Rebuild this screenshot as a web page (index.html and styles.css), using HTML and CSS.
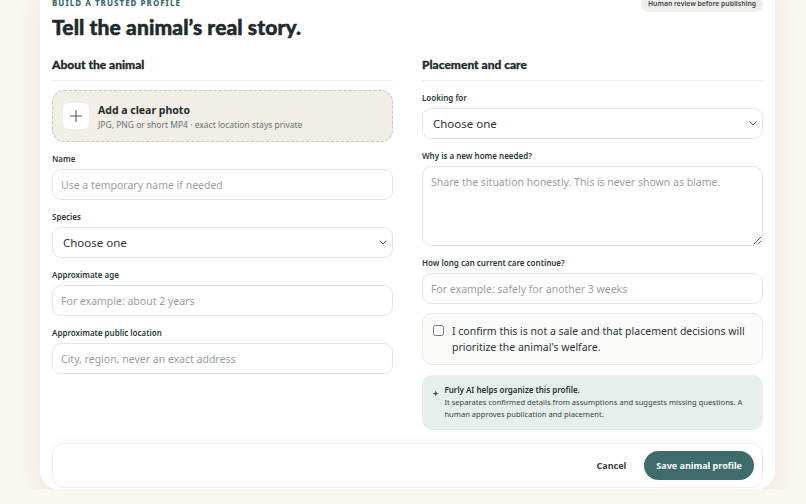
FILE: index.html
```html
<!DOCTYPE html>
<html lang="en">
<head>
  <meta charset="UTF-8">
  <meta name="viewport" content="width=device-width, initial-scale=1.0">
  <title>Furly - New animal profile</title>
  <link rel="stylesheet" href="styles.css">
</head>
<body>
  <main class="profile-card">
    <!-- Header -->
    <header class="profile-header">
      <div>
        <p class="eyebrow">Build a trusted profile</p>
        <h1>Tell the animal’s real story.</h1>
      </div>
      <span class="review-badge">Human review before publishing</span>
    </header>

    <form class="profile-form" onsubmit="return false;">
      <div class="form-columns">
        <!-- Left column -->
        <section class="form-section">
          <h2>About the animal</h2>

          <label class="dropzone">
            <span class="dropzone-icon">
              <svg width="14" height="14" viewBox="0 0 14 14" fill="none" stroke="currentColor" stroke-width="1.1" stroke-linecap="round">
                <path d="M7 1.5v11M1.5 7h11"/>
              </svg>
            </span>
            <span class="dropzone-text">
              <strong>Add a clear photo</strong>
              <small>JPG, PNG or short MP4 · exact location stays private</small>
            </span>
            <input type="file" accept="image/png,image/jpeg,video/mp4" hidden>
          </label>

          <div class="field">
            <label for="name">Name</label>
            <input id="name" type="text" placeholder="Use a temporary name if needed">
          </div>

          <div class="field">
            <label for="species">Species</label>
            <div class="select-wrap">
              <select id="species">
                <option>Choose one</option>
                <option>Dog</option>
                <option>Cat</option>
                <option>Rabbit</option>
                <option>Other</option>
              </select>
              <svg class="chevron" width="8" height="5" viewBox="0 0 8 5" fill="none" stroke="currentColor" stroke-width="1" stroke-linecap="round" stroke-linejoin="round">
                <path d="M1 1l3 3 3-3"/>
              </svg>
            </div>
          </div>

          <div class="field">
            <label for="age">Approximate age</label>
            <input id="age" type="text" placeholder="For example: about 2 years">
          </div>

          <div class="field">
            <label for="location">Approximate public location</label>
            <input id="location" type="text" placeholder="City, region, never an exact address">
          </div>
        </section>

        <!-- Right column -->
        <section class="form-section">
          <h2>Placement and care</h2>

          <div class="field">
            <label for="looking">Looking for</label>
            <div class="select-wrap">
              <select id="looking">
                <option>Choose one</option>
                <option>Adoption</option>
                <option>Foster home</option>
              </select>
              <svg class="chevron" width="8" height="5" viewBox="0 0 8 5" fill="none" stroke="currentColor" stroke-width="1" stroke-linecap="round" stroke-linejoin="round">
                <path d="M1 1l3 3 3-3"/>
              </svg>
            </div>
          </div>

          <div class="field">
            <label for="reason">Why is a new home needed?</label>
            <textarea id="reason" placeholder="Share the situation honestly. This is never shown as blame."></textarea>
          </div>

          <div class="field">
            <label for="duration">How long can current care continue?</label>
            <input id="duration" type="text" placeholder="For example: safely for another 3 weeks">
          </div>

          <label class="confirm">
            <input type="checkbox">
            <span>I confirm this is not a sale and that placement decisions will prioritize the animal's welfare.</span>
          </label>

          <div class="ai-note">
            <svg class="ai-spark" width="11" height="11" viewBox="0 0 10 10">
              <path d="M5 0.5C5.4 3.3 6.2 4.4 9.5 5 6.2 5.6 5.4 6.7 5 9.5 4.6 6.7 3.8 5.6 0.5 5 3.8 4.4 4.6 3.3 5 0.5Z" fill="currentColor"/>
            </svg>
            <div>
              <strong>Furly AI helps organize this profile.</strong>
              <p>It separates confirmed details from assumptions and suggests missing questions. A human approves publication and placement.</p>
            </div>
          </div>
        </section>
      </div>

      <!-- Actions -->
      <div class="form-actions">
        <button type="button" class="btn-cancel">Cancel</button>
        <button type="submit" class="btn-save">Save animal profile</button>
      </div>
    </form>
  </main>
</body>
</html>
```

FILE: styles.css
```css
/* Global Styles */
body {
  margin: 0;
  font-family: 'Noto Sans', 'DejaVu Sans', sans-serif;
  background-color: #faf7f0;
  color: #1f2b2d;
}

/* Card */
.profile-card {
  width: 711px;
  margin: -16px 0 0 40px;
  padding: 0 12px 1px;
  background: #fff;
  border-radius: 0 0 18px 18px;
  box-shadow: 0 10px 24px rgba(60, 50, 30, 0.08);
}

/* Header */
.profile-header {
  display: flex;
  justify-content: space-between;
  align-items: flex-start;
}

.eyebrow {
  margin: 0;
  padding-top: 14px;
  font-size: 8px;
  line-height: 10px;
  font-weight: 800;
  letter-spacing: 1px;
  text-transform: uppercase;
  color: #3e6b6c;
}

.profile-header h1 {
  margin: 6px 0 0;
  font-family: 'Lato Black', 'Lato', 'Noto Sans', sans-serif;
  font-size: 21px;
  line-height: 26px;
  font-weight: 900;
  letter-spacing: 0.1px;
  -webkit-text-stroke: 0.5px #1f2a2c;
  color: #1f2a2c;
}

.review-badge {
  margin-top: 13px;
  padding: 2px 7px 3px;
  font-size: 6.8px;
  line-height: 10px;
  font-weight: 600;
  color: #3c4648;
  background: #efeeea;
  border-radius: 10px;
}

/* Columns */
.form-columns {
  display: grid;
  grid-template-columns: 1fr 1fr;
  gap: 29px;
  margin-top: 17px;
}

.form-section h2 {
  margin: 0 0 9px;
  padding-bottom: 7px;
  font-family: 'Lato Black', 'Lato', 'Noto Sans', sans-serif;
  font-size: 12px;
  line-height: 16px;
  font-weight: 900;
  -webkit-text-stroke: 0.3px #1f2b2d;
  border-bottom: 1px solid #eeeeea;
}

/* Photo drop zone */
.dropzone {
  display: flex;
  align-items: center;
  gap: 9px;
  height: 50px;
  padding: 0 10px;
  background: #f1eee7;
  border: 1px dashed #c8c5bc;
  border-radius: 12px;
  cursor: pointer;
}

.dropzone-icon {
  display: flex;
  align-items: center;
  justify-content: center;
  width: 26px;
  height: 26px;
  background: #fff;
  border-radius: 6px;
  color: #4c5a5c;
}

.dropzone-text strong {
  display: block;
  font-size: 10.5px;
  line-height: 14px;
  font-weight: 700;
}

.dropzone-text small {
  display: block;
  margin-top: 2px;
  font-size: 8.5px;
  color: #6b7374;
}

/* Fields */
.field {
  margin-top: 11px;
}

.field label {
  display: block;
  margin-bottom: 5px;
  font-size: 8px;
  line-height: 11px;
  font-weight: 600;
  color: #2d3739;
}

.field input,
.field select,
.field textarea {
  display: block;
  box-sizing: border-box;
  width: 100%;
  height: 31px;
  padding: 0 8px;
  font-family: inherit;
  font-size: 10.5px;
  color: #2b3537;
  background: #fff;
  border: 1px solid #e7e7e2;
  border-radius: 9px;
}

.field input::placeholder,
.field textarea::placeholder {
  color: #9a9f9f;
}

.select-wrap {
  position: relative;
}

.field select {
  appearance: none;
  -webkit-appearance: none;
  font-size: 11.5px;
  padding: 0 10px;
}

.chevron {
  position: absolute;
  right: 6px;
  top: 13px;
  color: #5a6466;
  pointer-events: none;
}

.field textarea {
  height: 80px;
  padding: 8px;
  resize: vertical;
}

/* Confirmation */
.confirm {
  display: flex;
  align-items: flex-start;
  gap: 8px;
  margin-top: 9px;
  padding: 9px 10px;
  font-size: 10.5px;
  line-height: 16px;
  color: #2b3537;
  background: #fbfcfa;
  border: 1px solid #ebece8;
  border-radius: 10px;
}

.confirm input {
  width: 11px;
  height: 11px;
  margin: 2px 0 0;
}

/* AI note */
.ai-note {
  display: flex;
  align-items: flex-start;
  gap: 5px;
  margin-top: 10px;
  padding: 9px 10px 10px;
  background: #e7efec;
  border-radius: 10px;
  font-size: 7.6px;
  line-height: 12px;
  color: #3a4446;
}

.ai-spark {
  margin-top: 4px;
  color: #2f5e5f;
}

.ai-note strong {
  font-size: 8px;
  font-weight: 600;
  color: #263032;
}

.ai-note p {
  margin: 0;
}

/* Actions */
.form-actions {
  display: flex;
  justify-content: flex-end;
  align-items: center;
  gap: 18px;
  margin-top: 13px;
  padding: 7px 8px;
  border: 1px solid #eeeeea;
  border-radius: 12px;
  box-shadow: 0 -2px 8px rgba(0, 0, 0, 0.03);
}

.btn-cancel {
  padding: 0;
  background: none;
  border: none;
  font-family: inherit;
  font-size: 9px;
  font-weight: 700;
  color: #3a4446;
  cursor: pointer;
}

.btn-save {
  height: 29px;
  padding: 0 12px;
  background: #3e6b6c;
  color: #fff;
  border: none;
  border-radius: 15px;
  font-family: inherit;
  font-size: 9px;
  font-weight: 700;
  cursor: pointer;
}
```
